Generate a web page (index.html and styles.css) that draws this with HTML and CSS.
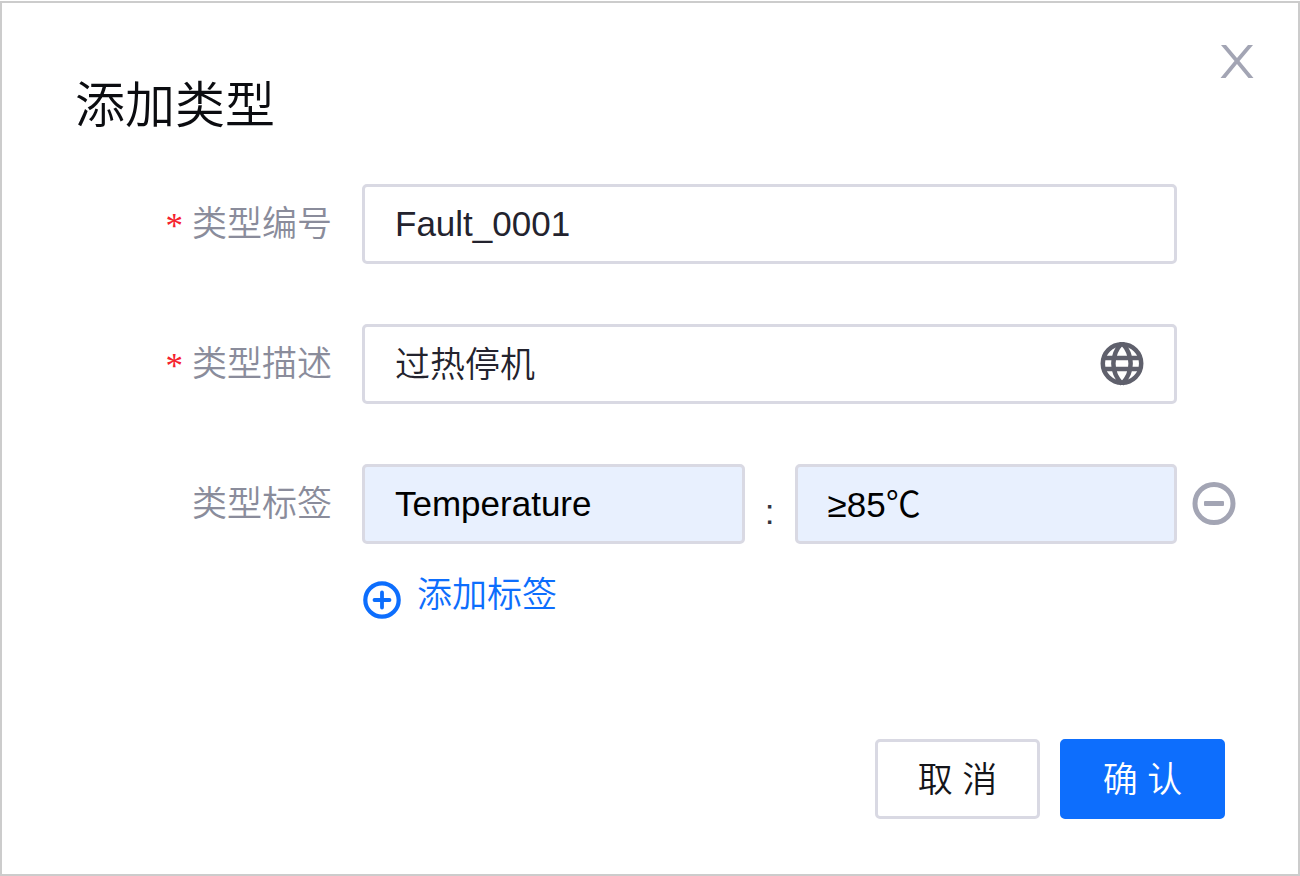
FILE: index.html
```html
<!DOCTYPE html>
<html lang="zh-CN">
  <head>
    <meta charset="UTF-8" />
    <meta name="viewport" content="width=device-width, initial-scale=1.0" />
    <title>添加类型</title>
    <link rel="stylesheet" href="styles.css">
  </head>
  <body>
    <form class="dialog" role="dialog" aria-labelledby="dialog-title">
      <header class="dialog-header">
        <h1 id="dialog-title">添加类型</h1>
        <button type="button" class="icon-btn close" aria-label="关闭">
          <svg width="34" height="34" viewBox="0 0 34 34">
            <path d="M1 1h5l11 13L28 1h5L19.500 17 33.500 34h-5L17 20 5.500 34h-5L14.500 17z" fill="#a3a5b4" />
          </svg>
        </button>
      </header>

      <div class="dialog-body">
        <div class="row">
          <label class="row-label required" for="code">类型编号</label>
          <div class="control">
            <input type="text" id="code" name="code" value="Fault_0001" required />
          </div>
        </div>

        <div class="row">
          <label class="row-label required" for="desc">类型描述</label>
          <div class="control">
            <input type="text" class="cjk" id="desc" name="desc" value="过热停机" required />
            <button type="button" class="icon-btn globe" aria-label="多语言">
              <svg width="44" height="44" viewBox="0 0 44 44" fill="none" stroke="#5f606c" stroke-width="4.500">
                <circle cx="22" cy="21.500" r="19.200" />
                <path d="M22 1c-11.500 12-11.500 29 0 41M22 1c11.500 12 11.500 29 0 41M4 16h36M4 27h36" />
              </svg>
            </button>
          </div>
        </div>

        <div class="row">
          <label class="row-label" for="tag-key">类型标签</label>
          <div class="control tag">
            <input type="text" class="filled" id="tag-key" name="tag-key" value="Temperature" />
            <span class="colon">:</span>
            <input type="text" class="filled cjk" name="tag-value" value="≥85℃" aria-label="标签值" />
            <button type="button" class="icon-btn remove" aria-label="删除标签">
              <svg width="44" height="44" viewBox="0 0 44 44" fill="none" stroke="#a3a5b4" stroke-width="5">
                <circle cx="22" cy="21.500" r="19" />
                <rect x="12" y="19" width="20" height="5" rx="1" fill="#a3a5b4" stroke="none" />
              </svg>
            </button>
          </div>
        </div>

        <button type="button" class="add">
          <svg width="38" height="38" viewBox="0 0 38 38" fill="none" stroke="#0d6efd" stroke-width="4.200">
            <circle cx="19" cy="19" r="16.700" />
            <path d="M11.500 19h15M19 11.500v15" stroke-linecap="round" stroke-width="3.800" />
          </svg>
          <span>添加标签</span>
        </button>
      </div>

      <footer class="dialog-footer">
        <button type="button" class="btn">取 消</button>
        <button type="submit" class="btn primary">确 认</button>
      </footer>
    </form>
  </body>
</html>
```

FILE: styles.css
```css
* {
  box-sizing: border-box;
}
body {
  margin: 0;
  padding-top: 1px;
  background: #fff;
  color: #14151a;
  font-family: "Liberation Sans", "Noto Sans CJK SC", sans-serif;
  font-size: 35px;
  font-weight: 350;
  line-height: 40px;
}
button,
input {
  font: inherit;
  color: inherit;
}
button {
  padding: 0;
  border: 0;
  background: none;
  cursor: pointer;
}
svg {
  display: block;
}
.dialog {
  padding: 41px 73px 55px;
  border: 2px solid #ccc;
}
.dialog-header {
  display: flex;
  justify-content: space-between;
  align-items: flex-start;
  margin-right: -29px;
}
.dialog-header h1 {
  margin: 32px 0 48px;
  color: #0b0c10;
  font-size: 50px;
  font-weight: 350;
  line-height: 60px;
}
.dialog-body {
  padding-right: 48px;
}
.row {
  display: flex;
  align-items: center;
  margin-bottom: 60px;
}
.row-label {
  display: flex;
  justify-content: flex-end;
  flex: 0 0 257px;
  margin-right: 30px;
  color: #8a8c9b;
}
.required::before {
  content: "*";
  margin: 3px 9px -3px 0;
  color: #f5222d;
  font-family: "Liberation Serif", serif;
}
.control {
  position: relative;
  flex: 1;
  min-width: 0;
  display: flex;
  align-items: center;
}
.control input {
  flex: 1;
  min-width: 0;
  height: 80px;
  padding: 0 30px;
  border: 3px solid #d9d9e3;
  border-radius: 5px;
  background: #fff;
  color: #23232e;
  outline: 0;
}
.control .cjk {
  padding-bottom: 6px;
}
.control .filled {
  background: #e8f0fe;
  color: #000;
}
.colon {
  width: 50px;
  padding-top: 16px;
  color: #33343f;
  text-align: center;
}
.globe {
  position: absolute;
  right: 33px;
}
.remove {
  position: absolute;
  left: 100%;
  margin-left: 15px;
}
.add {
  display: flex;
  align-items: center;
  gap: 16px;
  margin: -34px 0 0 288px;
  color: #0d6efd;
  line-height: 50px;
}
.add svg {
  margin-top: 10px;
}
.dialog-footer {
  display: flex;
  justify-content: flex-end;
  gap: 20px;
  margin-top: 119px;
}
.btn {
  width: 165px;
  height: 80px;
  padding-top: 2px;
  border: 3px solid #d9d9e3;
  border-radius: 5px;
  background: #fff;
}
.primary {
  border-color: #0d6efd;
  background: #0d6efd;
  color: #fff;
}
```
